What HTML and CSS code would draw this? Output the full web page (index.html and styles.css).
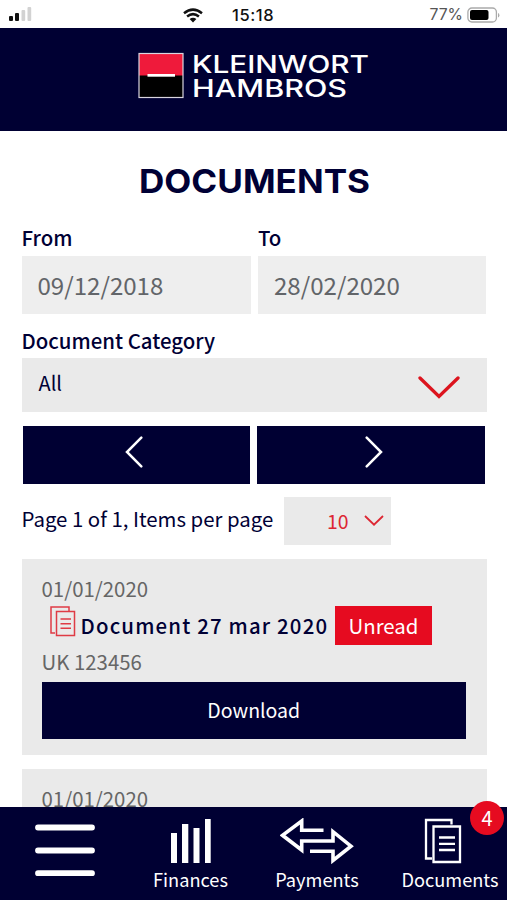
FILE: index.html
```html
<!DOCTYPE html>
<html lang="en">
<head>
<meta charset="utf-8">
<title>Documents</title>
<link rel="stylesheet" href="styles.css">
</head>
<body>
<div class="app">
  <div class="status">
    <svg class="signal" width="24" height="16" viewBox="0 0 24 16"><g fill="#111"><rect x="1" y="10" width="4" height="5" rx="1"/><rect x="7" y="7" width="4" height="8" rx="1"/></g><g fill="#d2d2d2"><rect x="13.5" y="4" width="3.7" height="11" rx="1"/><rect x="19.5" y="1" width="3.7" height="14" rx="1"/></g></svg>
    <svg class="wifi" width="20" height="15" viewBox="0 0 20 15"><g fill="none" stroke="#111" stroke-width="2.5"><path d="M1 5.2Q10-2 19 5.2"/><path d="M4.1 8.5Q10 3.7 15.9 8.5"/></g><path d="M6.6 11Q10 8.4 13.4 11L10 14.5Z" fill="#111"/></svg>
    <span class="time">15:18</span>
    <span class="percent">77%</span>
    <svg class="battery" width="33" height="17" viewBox="0 0 33 17"><rect x=".9" y="1" width="28.5" height="14" rx="4" fill="#fff" stroke="#aaa" stroke-width="1.3"/><rect x="3" y="3" width="18.5" height="10" rx="2" fill="#000"/><path d="M31 6v4.5q1.4-.5 1.4-2.2T31 6Z" fill="#aaa"/></svg>
  </div>
  <header class="brand">
    <svg width="232" height="56" viewBox="0 0 232 56">
      <rect x="1" y="3.5" width="44" height="44" fill="#000"/><rect x="1" y="3.5" width="44" height="22" fill="#ef1a3b"/>
      <rect x="1" y="3.5" width="44" height="44" fill="none" stroke="#d9d5df" stroke-width="1.2"/>
      <rect x="9.5" y="24" width="27.5" height="2.7" fill="#fff"/>
      <g class="wordmark"><text x="54" y="22.8" textLength="177" lengthAdjust="spacingAndGlyphs">KLEINWORT</text><text x="54" y="46.6" textLength="155" lengthAdjust="spacingAndGlyphs">HAMBROS</text></g>
    </svg>
  </header>
  <main class="content">
    <h1 class="title"><svg width="232" height="40" viewBox="0 0 232 40"><text x="0" y="32" textLength="231" lengthAdjust="spacingAndGlyphs">DOCUMENTS</text></svg></h1>
    <div class="dates">
      <label class="field"><span class="label">From</span><span class="date">09/12/2018</span></label>
      <label class="field"><span class="label">To</span><span class="date">28/02/2020</span></label>
    </div>
    <div class="label category">Document Category</div>
    <div class="select"><span>All</span><svg width="42" height="24" viewBox="0 0 42 24"><path d="M2 2 21 20.5 40 2" fill="none" stroke="#dc141e" stroke-width="3.3" stroke-linecap="round"/></svg></div>
    <div class="pager">
      <div class="page-button"><svg width="18" height="32" viewBox="0 0 18 32"><path d="M16.3 1.7 2 16 16.3 30.3" fill="none" stroke="#fff" stroke-width="2.5" stroke-linecap="round"/></svg></div>
      <div class="page-button"><svg width="18" height="32" viewBox="0 0 18 32"><path d="M1.7 1.7 16 16 1.7 30.3" fill="none" stroke="#fff" stroke-width="2.5" stroke-linecap="round"/></svg></div>
    </div>
    <div class="paging"><span class="page-text">Page 1 of 1, Items per page</span><div class="count"><span>10</span><svg width="20" height="12" viewBox="0 0 20 12"><path d="M1 1 10 9.7 19 1" fill="none" stroke="#dd2733" stroke-width="1.8"/></svg></div></div>
    <article class="card">
      <div class="meta">01/01/2020</div>
      <div class="document">
        <svg width="26" height="31" viewBox="0 0 26 31"><g fill="none" stroke="#df3b45" stroke-width="1.5"><path d="M5 27H1V1h18v4"/><path d="M6.5 5.5H24.5V29.5H6.5Z"/><path d="M10.5 13h10.5M10.5 17.7h10.5M10.5 22.3h10.5"/></g></svg>
        <span class="name">Document 27 mar 2020</span><span class="tag">Unread</span>
      </div>
      <div class="meta ref">UK 123456</div>
      <div class="download">Download</div>
    </article>
    <article class="card"><div class="meta">01/01/2020</div></article>
  </main>
  <nav class="nav">
    <div class="item menu"><svg width="60" height="54" viewBox="0 0 60 54"><path d="M3 3.5h54M3 26.5h54M3 49.2h54" stroke="#fff" stroke-width="5.8" stroke-linecap="round"/></svg></div>
    <div class="item finances"><svg width="42" height="46" viewBox="0 0 42 46"><path d="M1 15h6v30H1ZM12 6h6.3v39H12ZM23.5 10h6v35h-6ZM35 1h5.7v44H35Z" fill="#fff"/></svg><span>Finances</span></div>
    <div class="item payments"><svg width="74" height="46" viewBox="0 0 74 46"><g fill="none" stroke="#fff" stroke-width="3.6"><path d="M43.5 12.3H21.7V3L2.5 17.3 21.7 32V23H53V13.7L71 28.2 53 42.5V33.3H30"/></g></svg><span>Payments</span></div>
    <div class="item docs"><svg width="38" height="46" viewBox="0 0 38 46"><g fill="none" stroke="#fff" stroke-width="2.3"><path d="M8 40.5H2V2H27.5V6.5"/><path d="M9.5 8.5H36V44H9.5Z"/><path d="M15 19.5h16M15 25.8h16M15 32h16"/></g></svg><span>Documents</span><b class="badge">4</b></div>
  </nav>
</div>
</body>
</html>
```
FILE: styles.css
```css
* { box-sizing: border-box; }
body { margin: 0; font-family: "Noto Sans CJK SC", "Noto Sans", sans-serif; color: #000035; background: #fff; }
svg { display: block; flex: none; }
.app { width: 507px; height: 900px; overflow: hidden; display: flex; flex-direction: column; }
.status { flex: none; height: 28px; display: flex; align-items: center; padding: 2px 7px 0 8px; font-family: Inter, sans-serif; line-height: 20px; color: #111; }
.signal { margin-right: 151px; margin-bottom: 2px; }
.wifi { margin-right: 29px; }
.time { width: 45px; font-size: 16.5px; font-weight: 500; letter-spacing: .6px; }
.percent { margin-left: auto; margin-right: 4px; font-size: 15.7px; color: #555; }
.brand { flex: none; height: 103px; background: #000033; padding: 22px 0 0 138px; }
.wordmark { font: 500 24px Inter, sans-serif; fill: #fff; }
.content { flex: 1; min-height: 0; overflow: hidden; padding: 0 20.5px 0 21.5px; }
.title { margin: 30px 0 0 117px; height: 66px; }
.title text { font: 700 33px Inter, sans-serif; fill: #000035; }
.dates { display: flex; gap: 7.5px; padding-right: 1px; }
.field { flex: 1; }
.field:first-child { flex: 0 0 229px; }
.label { display: block; font-size: 20.4px; font-weight: 500; line-height: 20px; white-space: nowrap; }
.date { display: block; height: 58px; margin-top: 9px; padding-left: 16px; background: #eee; color: #626569; font-size: 24.1px; line-height: 57px; }
.category { margin-top: 16px; }
.select { height: 54px; margin-top: 8px; padding: 0 26.5px 0 17px; background: #eaeaea; display: flex; align-items: center; justify-content: space-between; font-size: 20px; line-height: 20px; }
.select span { margin-bottom: 4px; }
.select svg { margin-top: 5px; }
.pager { display: flex; gap: 7px; margin-top: 14px; padding: 0 1.5px 0 1px; }
.page-button { flex: 1; height: 57.5px; background: #000033; display: flex; justify-content: center; padding-top: 9.5px; }
.page-button:first-child svg { margin-right: 4px; }
.page-button:last-child svg { margin-left: 5px; }
.paging { display: flex; margin-top: 13.5px; height: 47.5px; }
.page-text { width: 262px; font-size: 20.4px; line-height: 42px; white-space: nowrap; }
.count { width: 107.5px; background: #eaeaea; display: flex; align-items: center; padding-left: 43.5px; font-size: 19.4px; line-height: 46px; color: #dd2733; }
.count svg { margin-left: 15.5px; }
.card { height: 196.5px; margin-top: 14px; padding: 18px 20.5px 0 20px; background: #eaeaea; }
.meta { font-size: 20.4px; line-height: 22px; color: #666; }
.document { display: flex; height: 39px; margin-top: 7px; padding-left: 8px; align-items: flex-start; }
.name { width: 254.5px; margin-left: 5px; font-size: 20.4px; font-weight: 500; line-height: 38px; letter-spacing: 1.17px; white-space: nowrap; }
.tag { width: 97px; height: 39px; background: #e60b20; color: #fff; text-align: center; font-size: 20.4px; line-height: 38px; }
.ref { margin-top: 5px; }
.download { margin-top: 10px; height: 57.5px; background: #000033; color: #fff; text-align: center; font-size: 19.5px; line-height: 55px; }
.nav { flex: none; height: 93px; background: #000033; color: #fff; display: flex; }
.item { display: flex; flex-direction: column; align-items: center; position: relative; font-size: 18.2px; line-height: 24px; white-space: nowrap; }
.item span { margin-top: 3px; }
.item > svg { margin-top: 11px; }
.menu { width: 129px; }
.menu > svg { margin-top: 17px; }
.finances { width: 123px; }
.payments { width: 130px; }
.docs { width: 125px; padding-left: 10px; }
.docs > svg { margin-right: 14px; }
.docs > span { margin-left: 1px; }
.badge { position: absolute; right: 3px; top: -6px; width: 34px; height: 34px; border-radius: 50%; background: #e60b20; text-align: center; font-size: 20px; line-height: 33px; font-weight: 400; }
```
